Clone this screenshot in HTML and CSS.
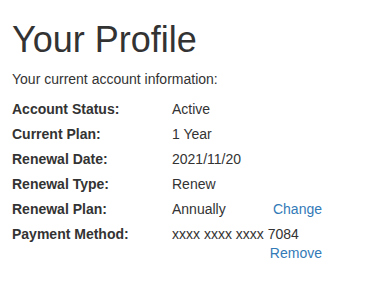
FILE: index.html
```html
<!DOCTYPE html>
<html>
<head>
<meta charset="utf-8">
<link rel="stylesheet" href="styles.css">
</head>
<body>
<div class="page">
  <h1 class="title">Your Profile</h1>
  <p class="intro">Your current account information:</p>
  <div class="details">
    <div class="label">Account Status:</div><div class="value wide">Active</div>
    <div class="label">Current Plan:</div><div class="value wide">1 Year</div>
    <div class="label">Renewal Date:</div><div class="value wide">2021/11/20</div>
    <div class="label">Renewal Type:</div><div class="value wide">Renew</div>
    <div class="label">Renewal Plan:</div><div class="value">Annually</div><a class="action" href="#">Change</a>
    <div class="label">Payment Method:</div><div class="value wide">xxxx xxxx xxxx 7084</div>
    <div class="spacer"></div><a class="action sub" href="#">Remove</a>
  </div>
</div>
</body>
</html>
```
FILE: styles.css
```css
html, body {
  margin: 0;
  padding: 0;
  background: #fff;
}
body {
  font-family: "Liberation Sans", Arial, sans-serif;
  font-size: 14px;
  line-height: 1.42857;
  color: #333;
}
.page {
  padding: 0 12px;
}
.title {
  font-size: 36px;
  font-weight: 500;
  line-height: 1.1;
  margin: 20px 0 10px;
}
.intro {
  margin: 0 0 10px;
}
.details {
  display: grid;
  grid-template-columns: 160px 90px 60px;
  row-gap: 5px;
  width: 310px;
}
.label {
  font-weight: bold;
}
.value.wide {
  grid-column: 2 / 4;
}
.action {
  color: #337ab7;
  text-decoration: none;
  text-align: right;
}
.spacer {
  grid-column: 1 / 3;
}
.action.sub {
  margin-top: -5px;
}
```
